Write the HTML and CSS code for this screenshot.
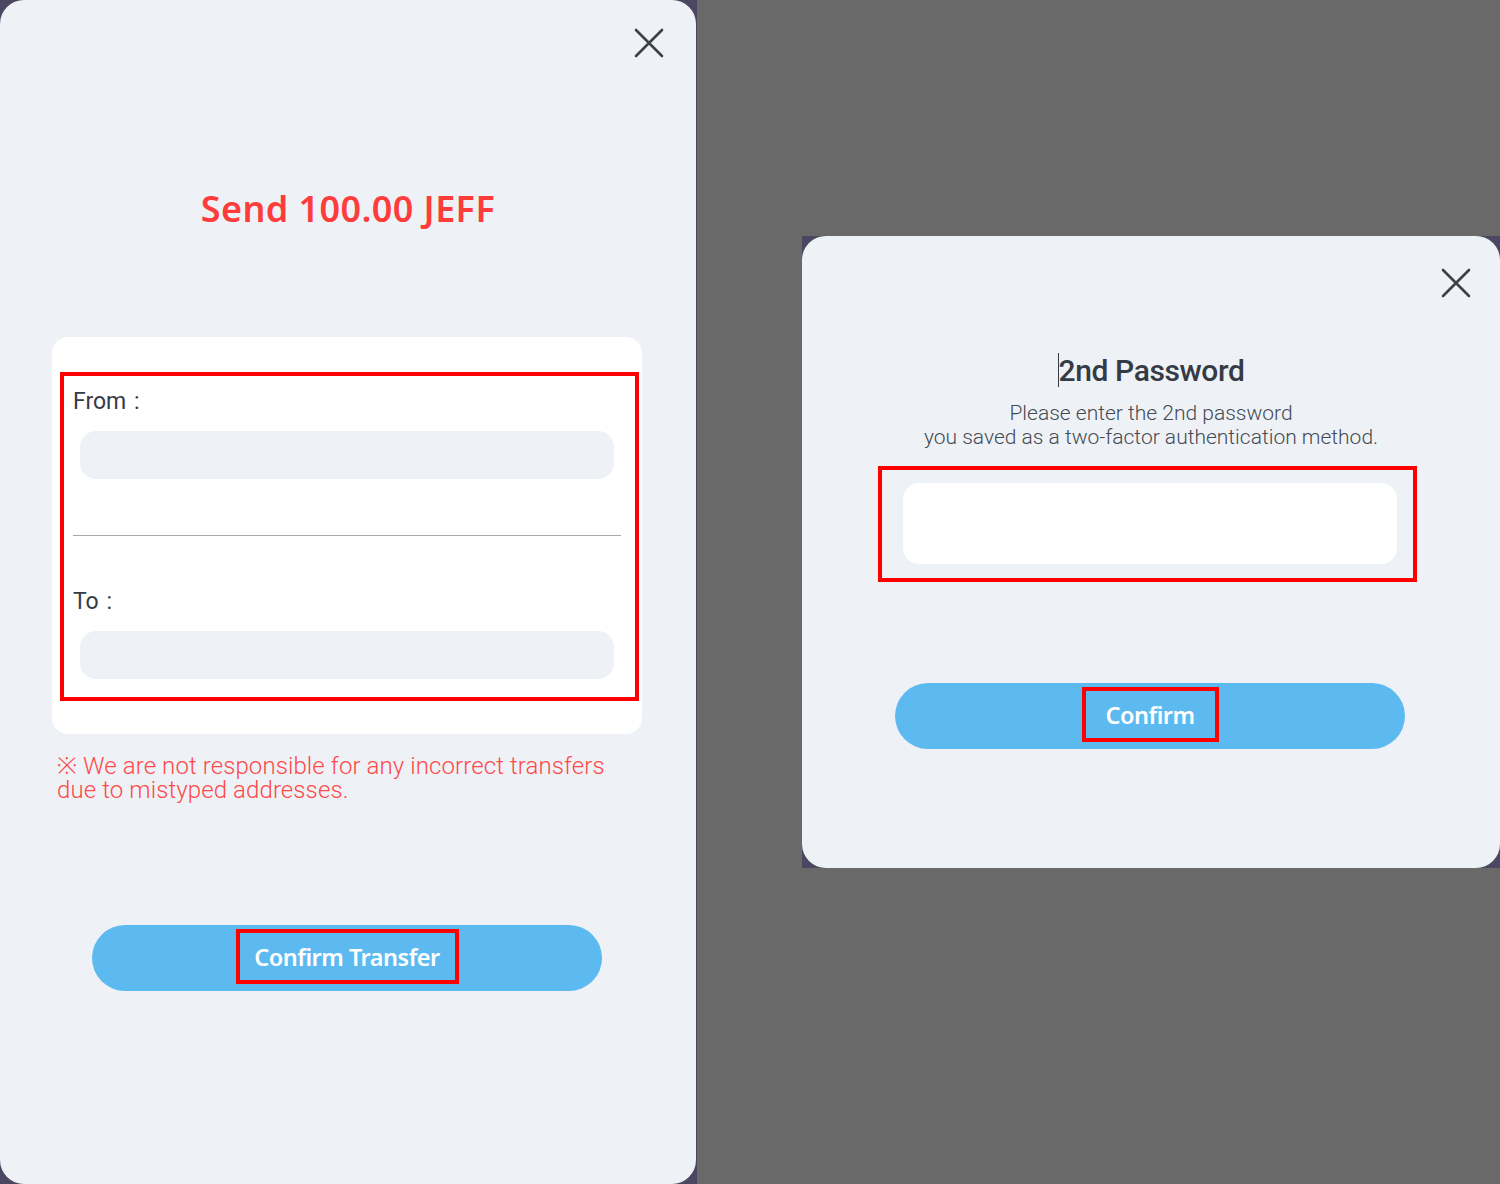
FILE: index.html
```html
<!DOCTYPE html>
<html lang="en">
<head>
<meta charset="UTF-8">
<meta name="viewport" content="width=device-width, initial-scale=1.0">
<title>Send JEFF</title>
<link rel="stylesheet" href="styles.css">
</head>
<body>

<div class="frame frame-send">
    <div class="modal modal-send">
        <div class="modal-top">
            <button class="close" aria-label="Close">
                <svg width="30" height="30" viewBox="0 0 30 30"><path d="M2 2 L28 28 M28 2 L2 28" stroke="#3c4149" stroke-width="2.6" stroke-linecap="round"/></svg>
            </button>
        </div>

        <h1 class="send-title">Send 100.00 JEFF</h1>

        <div class="card">
            <div class="highlight address-box">
                <label class="field-label" for="from">From :</label>
                <input class="field" id="from" type="text" readonly>
                <hr class="divider">
                <label class="field-label to-label" for="to">To :</label>
                <input class="field" id="to" type="text" readonly>
            </div>
        </div>

        <p class="warning">※ We are not responsible for any incorrect transfers<br>due to mistyped addresses.</p>

        <button class="btn-main btn-transfer"><span class="highlight btn-label">Confirm Transfer</span></button>
    </div>
</div>

<div class="frame frame-password">
    <div class="modal modal-password">
        <div class="modal-top">
            <button class="close" aria-label="Close">
                <svg width="30" height="30" viewBox="0 0 30 30"><path d="M2 2 L28 28 M28 2 L2 28" stroke="#3c4149" stroke-width="2.6" stroke-linecap="round"/></svg>
            </button>
        </div>

        <h2 class="pw-title"><span class="caret"></span>2nd Password</h2>
        <p class="pw-text">Please enter the 2nd password<br>you saved as a two-factor authentication method.</p>

        <div class="highlight pw-box">
            <input class="pw-field" type="password">
        </div>

        <button class="btn-main btn-confirm"><span class="highlight btn-label">Confirm</span></button>
    </div>
</div>

</body>
</html>
```

FILE: styles.css
```css
/* Fundo geral */
body {
    margin: 0;
    height: 1184px;
    overflow: hidden;
    background-color: #696969;
    display: flex;
    align-items: flex-start;
    font-family: Roboto, "Noto Sans", sans-serif;
    color: #3a4049;
}

/* Moldura escura atrás dos modais (aparece nos cantos) */
.frame {
    background-color: #4b4662;
    flex: none;
}

.frame-send {
    width: 697px;
    height: 1184px;
}

.frame-password {
    width: 698px;
    height: 632px;
    margin-top: 236px;
    margin-left: 105px;
}

/* Caixa do modal */
.modal {
    background-color: #eef2f6;
    border-radius: 24px;
    height: 100%;
    box-sizing: border-box;
    display: flex;
    flex-direction: column;
}

.modal-send {
    width: 696px;
}

.modal-top {
    display: flex;
    justify-content: flex-end;
}

/* Botão de fechar */
.close {
    border: none;
    background: none;
    padding: 0;
    width: 30px;
    height: 30px;
    cursor: pointer;
}

.modal-send .close {
    margin: 28px 32px 0 0;
}

.modal-password .close {
    margin: 32px 29px 0 0;
}

/* Contorno vermelho de destaque */
.highlight {
    border: 4px solid #ff0000;
    box-sizing: border-box;
}

/* Título do envio */
.send-title {
    margin: 131px 0 0;
    text-align: center;
    font-family: "Noto Sans", sans-serif;
    font-size: 36px;
    line-height: 40px;
    font-weight: 600;
    letter-spacing: 0.4px;
    color: #ff3c3c;
}

/* Cartão branco com os endereços */
.card {
    margin: 108px 0 0 52px;
    width: 590px;
    height: 397px;
    background-color: #ffffff;
    border-radius: 16px;
    padding: 35px 0 0 8px;
    box-sizing: border-box;
}

.address-box {
    width: 579px;
    height: 329px;
    padding: 12px 0 0 9px;
    display: flex;
    flex-direction: column;
    align-items: flex-start;
}

.field-label {
    font-size: 23px;
    line-height: 28px;
    word-spacing: 2px;
    color: #353b45;
}

.field {
    margin: 15px 0 0 7px;
    width: 534px;
    height: 48px;
    padding: 0;
    box-sizing: border-box;
    border: none;
    border-radius: 16px;
    background-color: #eef2f6;
    outline: none;
}

.divider {
    margin: 56px 0 0 0;
    width: 548px;
    border: none;
    border-top: 1px solid #aaa7b0;
}

.to-label {
    margin-top: 52px;
}

/* Aviso */
.warning {
    margin: 20px 0 0 57px;
    font-size: 24px;
    line-height: 24px;
    font-weight: 300;
    letter-spacing: 0.1px;
    color: #ff4848;
}

/* Botões azuis */
.btn-main {
    width: 510px;
    height: 66px;
    border: none;
    border-radius: 33px;
    background-color: #5dbaf0;
    color: #ffffff;
    font-family: "Noto Sans", sans-serif;
    font-size: 23.5px;
    font-weight: 600;
    letter-spacing: -0.5px;
    display: flex;
    justify-content: center;
    align-items: flex-start;
    cursor: pointer;
}

.btn-label {
    height: 55px;
    margin-top: 3px;
    display: flex;
    align-items: center;
    justify-content: center;
}

.btn-transfer {
    margin: 123px 0 0 92px;
}

.btn-transfer .btn-label {
    width: 223px;
}

.btn-confirm {
    margin: 101px 0 0 93px;
}

.btn-confirm .btn-label {
    width: 137px;
}

/* Segundo modal: senha */
.pw-title {
    margin: 55px 0 0;
    text-align: center;
    font-size: 30px;
    line-height: 36px;
    font-weight: 500;
    letter-spacing: -0.4px;
    color: #353b45;
}

.caret {
    display: inline-block;
    width: 1px;
    height: 34px;
    background-color: #353b45;
    vertical-align: -6px;
}

.pw-text {
    margin: 12px 0 0;
    text-align: center;
    font-size: 21px;
    line-height: 24px;
    font-weight: 300;
    color: #444a54;
}

.pw-box {
    margin: 17px 0 0 76px;
    width: 539px;
    height: 116px;
    padding: 13px 0 0 21px;
}

.pw-field {
    width: 494px;
    height: 81px;
    padding: 0;
    box-sizing: border-box;
    border: none;
    border-radius: 16px;
    background-color: #ffffff;
    outline: none;
    display: block;
}
```
